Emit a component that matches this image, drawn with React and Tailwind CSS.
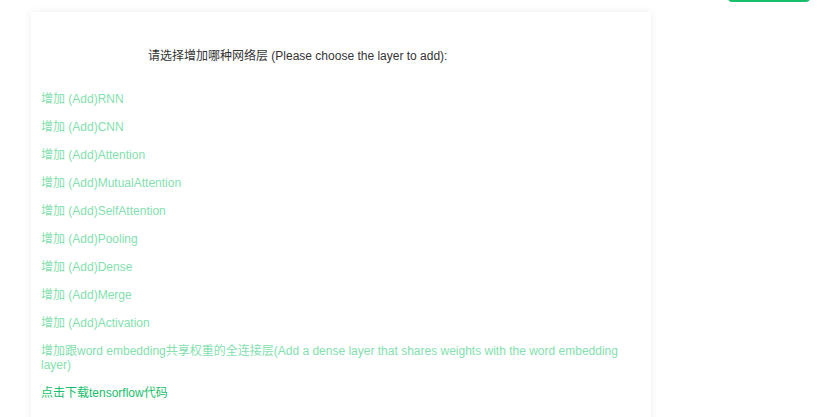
const layers = [
  "RNN",
  "CNN",
  "Attention",
  "MutualAttention",
  "SelfAttention",
  "Pooling",
  "Dense",
  "Merge",
  "Activation",
];

export default function App() {
  return (
    <div
      className="relative min-h-[417px] w-[817px] overflow-hidden bg-white text-[12px]"
      style={{ fontFamily: '"Liberation Sans", Arial, "Noto Sans CJK SC", sans-serif' }}
    >
      <button className="absolute right-[7px] top-[-30px] h-[32px] w-[82px] rounded-[4px] bg-[#19be6b]" />
      <div className="ml-[31px] mt-[12px] min-h-[420px] w-[620px] bg-white px-[10px] pt-[37px] shadow-[0_0_8px_rgba(0,0,0,0.07)]">
        <p className="pl-[107px] leading-[14px] text-[#333]">
          请选择增加哪种网络层 (Please choose the layer to add):
        </p>
        <div className="mt-[29px] flex flex-col gap-[14px] leading-[14px]">
          {layers.map((l) => (
            <a key={l} className="cursor-pointer text-[#83dfae]">
              增加 (Add){l}
            </a>
          ))}
          <a className="cursor-pointer text-[#83dfae]">
            增加跟word embedding共享权重的全连接层(Add a dense layer that shares weights with the word embedding layer)
          </a>
          <a className="cursor-pointer text-[#19be6b]">点击下载tensorflow代码</a>
        </div>
      </div>
    </div>
  );
}
